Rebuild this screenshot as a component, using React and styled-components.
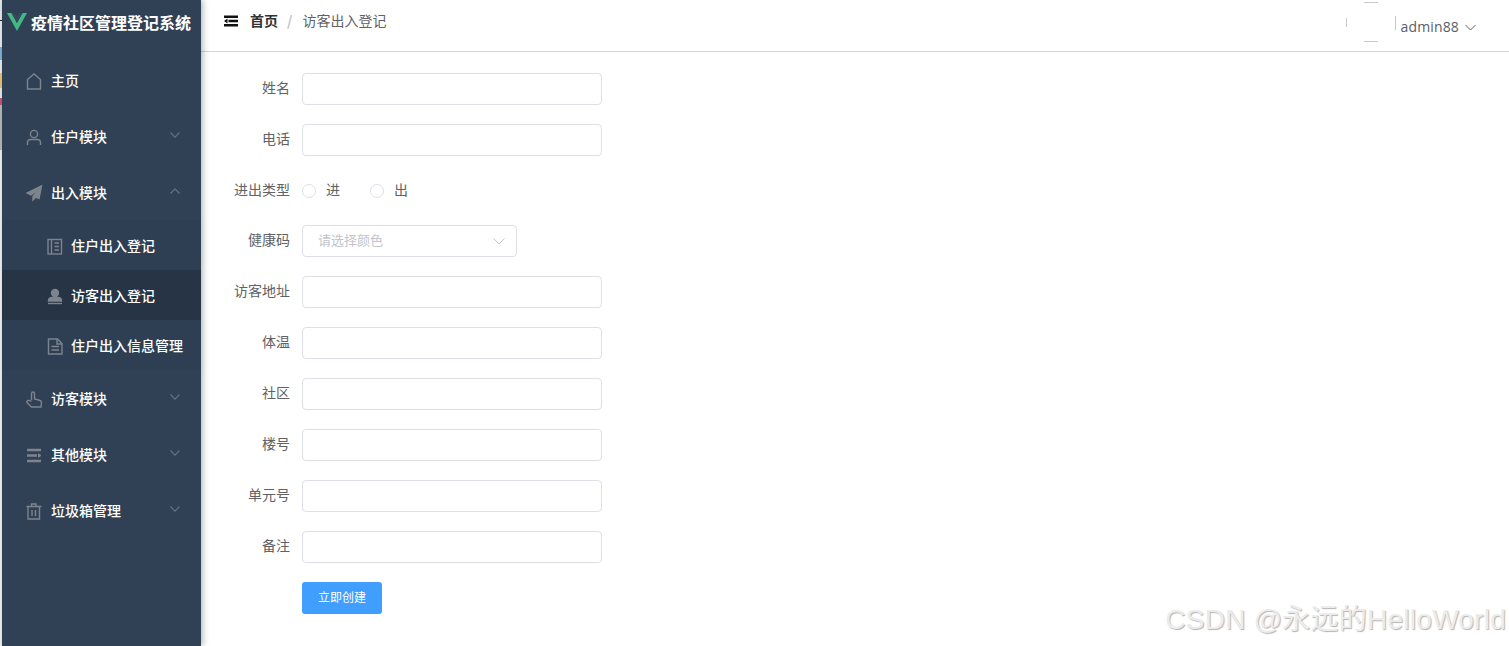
import React from "react";
import styled, { createGlobalStyle } from "styled-components";

const Global = createGlobalStyle`
  html, body { margin: 0; padding: 0; background: #fff; }
  body { font-family: "Liberation Sans", "Noto Sans CJK SC", sans-serif; overflow: hidden; }
  * { box-sizing: border-box; }
`;

const Page = styled.div`
  position: relative;
  display: flex;
  width: 1509px;
  height: 646px;
  overflow: hidden;
`;
const EdgeStrip = styled.div`
  width: 2px;
  flex: none;
  background: linear-gradient(#e6e8ea 0 20px, #222 20px 21px, #e8ecef 21px 47px, #7fb2d8 47px 60px, #e8ecef 60px 73px, #e6c674 73px 88px, #e8e8e8 88px 98px, #c7547f 98px 105px, #b9b9b9 105px 150px, #eef0f2 150px 646px);
`;
const Sidebar = styled.aside`
  width: 199px;
  flex: none;
  background: #304156;
  box-shadow: 2px 0 6px rgba(0, 21, 41, 0.3);
  z-index: 2;
`;
const Brand = styled.div`
  height: 44px;
  display: flex;
  align-items: center;
  padding-left: 5px;
  gap: 4px;
  color: #fff;
  font: 700 16px/20px "Noto Sans CJK SC", sans-serif;
  svg { flex: none; }
`;
const Menu = styled.nav`
  display: flex;
  flex-direction: column;
  padding-top: 8px;
`;
const Row = styled.div`
  height: 56px;
  display: flex;
  align-items: center;
  padding-left: 24px;
  padding-right: 21px;
  color: #fff;
  font: 500 14px/20px "Noto Sans CJK SC", sans-serif;
  gap: 8px;
`;
const SubRow = styled.div`
  height: 50px;
  display: flex;
  align-items: center;
  padding-left: 45px;
  gap: 7px;
  color: #fff;
  font: 500 14px/20px "Noto Sans CJK SC", sans-serif;
  background: ${(p) => (p.$active ? "#263445" : "#2f3f53")};
`;
const RowIcon = styled.svg`
  width: 17px;
  height: 17px;
  flex: none;
  margin-top: 2px;
  fill: none;
  stroke: #7d848e;
  stroke-width: 1.4;
`;
const Caret = styled.svg`
  width: 10px;
  height: 6px;
  margin-left: auto;
  margin-top: -3px;
  fill: none;
  stroke: #68727f;
  stroke-width: 1.1;
  transform: ${(p) => (p.$up ? "rotate(180deg)" : "none")};
`;
const Main = styled.main`
  flex: 1;
  min-width: 0;
  display: flex;
  flex-direction: column;
`;
const Header = styled.header`
  height: 52px;
  flex: none;
  border-bottom: 1px solid #d4d4d4;
  display: flex;
  align-items: flex-start;
  padding-left: 23px;
`;
const Hamburger = styled.svg`
  width: 14px;
  height: 12px;
  margin-top: 15px;
  flex: none;
`;
const Crumbs = styled.div`
  display: flex;
  align-items: center;
  height: 40px;
  margin-left: 12px;
  font: 14px/20px "Noto Sans CJK SC", sans-serif;
`;
const CrumbHome = styled.span`
  color: #303133;
  font-weight: 700;
`;
const CrumbSep = styled.span`
  color: #c0c4cc;
  margin: 0 10px 0 9px;
  font-weight: 700;
`;
const CrumbNow = styled.span`
  color: #606266;
`;
const UserBox = styled.div`
  margin-left: auto;
  margin-right: 33px;
  display: flex;
  align-items: flex-start;
  height: 50px;
  color: #5a5e66;
  font: 14px/20px "Open Sans", sans-serif;
`;
const Avatar = styled.svg`
  width: 50px;
  height: 40px;
  margin: 2px 5px 0 0;
`;
const UserName = styled.span`
  margin-top: 17px;
  letter-spacing: 0.15px;
`;
const UserCaret = styled.svg`
  width: 11px;
  height: 7px;
  margin: 24px 0 0 6px;
  fill: none;
  stroke: #5a5e66;
  stroke-width: 1;
`;
const Form = styled.div`
  padding: 21px 0 0 27px;
  display: flex;
  flex-direction: column;
  gap: 19px;
`;
const Field = styled.div`
  display: flex;
  align-items: center;
  height: ${(p) => p.$h || 32}px;
`;
const Label = styled.label`
  width: 62px;
  margin: -4px 12px 0 0;
  text-align: right;
  color: #606266;
  font: 14px/20px "Noto Sans CJK SC", sans-serif;
`;
const TextInput = styled.input`
  width: 300px;
  height: 32px;
  border: 1px solid #dcdfe6;
  border-radius: 4px;
  background: #fff;
  outline: none;
`;
const Radio = styled.span`
  display: flex;
  align-items: center;
  margin-right: 30px;
  color: #606266;
  font: 14px/20px "Noto Sans CJK SC", sans-serif;
  gap: 10px;
`;
const RadioText = styled.span`
  margin-top: -3px;
`;
const RadioDot = styled.span`
  width: 14px;
  height: 14px;
  border: 1px solid #dcdfe6;
  border-radius: 50%;
`;
const Select = styled.div`
  width: 215px;
  height: 32px;
  border: 1px solid #dcdfe6;
  border-radius: 4px;
  display: flex;
  align-items: center;
  padding: 0 11px 2px 15px;
  color: #c0c4cc;
  font: 13px/20px "Noto Sans CJK SC", sans-serif;
  justify-content: space-between;
`;
const SelectCaret = styled.svg`
  width: 12px;
  height: 8px;
  margin-top: 2px;
  fill: none;
  stroke: #c0c4cc;
  stroke-width: 1;
`;
const Submit = styled.button`
  width: 80px;
  height: 32px;
  margin-left: 74px;
  border: 0;
  padding: 0 0 2px;
  border-radius: 3px;
  background: #409eff;
  color: #fff;
  font: 12px/20px "Noto Sans CJK SC", sans-serif;
`;
const Watermark = styled.div`
  position: absolute;
  right: 3px;
  bottom: 9px;
  color: #ececec;
  font: 28px "Liberation Sans", "Noto Sans CJK SC", sans-serif;
  letter-spacing: 0.25px;
  text-shadow: 1px 1px 1px #b4b4b4;
`;

const ChevronPath = () => <path d="M.5 .5 5 5.200 9.500 .5" />;

const icons = {
  home: <path d="M1.500 16V6.500L8 1l6.500 5.500V16z" />,
  user: (
    <>
      <circle cx="8" cy="5" r="3.600" />
      <path d="M1.500 16v-2.500Q1.500 10.500 5 10.500h6q3.500 0 3.500 3V16" />
    </>
  ),
  plane: <path d="M15.500 1 1 8l4 2 9-7-7 8.500V15l2.800-3 3.200 1.500z" fill="#7d848e" />,
  book: (
    <>
      <rect x="1" y="1.500" width="13.500" height="14.500" />
      <path d="M4.500 1.500V16M7.500 5h4.500M7.500 8.500h4.500M7.500 12h4.500" />
    </>
  ),
  person: (
    <>
      <circle cx="8" cy="5" r="3.500" fill="#7d848e" />
      <path d="M1.500 13q0-3 3-3.500h7q3 .5 3 3.500z" fill="#7d848e" />
      <path d="M1 15.500h14" />
    </>
  ),
  doc: (
    <>
      <path d="M1.500 1h9l4.500 4.500V16H1.500z" />
      <path d="M10 1v5h5M4.500 8.500h7.500M4.500 12h7.500" />
    </>
  ),
  hand: <path d="M5.500 9V2.500a1.500 1.500 0 0 1 3 0V8l5 1.200q2 .5 2 2.500L15 16H5.500L1 11.500q-.5-1.500 1-2 1.500-.5 3.500 1" />,
  bars: (
    <g strokeWidth="2.400">
      <path d="M1 3h14M1 8.500h10M1 14h14" />
      <path d="M12.500 6.800v3.400l2.500-1.700z" strokeWidth="1" fill="#7d848e" />
    </g>
  ),
  trash: <path d="M.5 3.500h15M5.500 3.500V1h4.500v2.500M2 3.500V16h11.500V3.500M6 7v6M9.500 7v6" />,
};

const Icon = ({ name }) => <RowIcon viewBox="0 0 17 17">{icons[name]}</RowIcon>;

const MenuRow = ({ icon, label, caret, up }) => (
  <Row>
    <Icon name={icon} />
    <span>{label}</span>
    {caret && (
      <Caret viewBox="0 0 10 6" $up={up}>
        <ChevronPath />
      </Caret>
    )}
  </Row>
);

const Input = ({ label }) => (
  <Field>
    <Label>{label}</Label>
    <TextInput />
  </Field>
);

export default function App() {
  return (
    <Page>
      <Global />
      <EdgeStrip />
      <Sidebar>
        <Brand>
          <svg width="20" height="18" viewBox="0 0 20 18">
            <path d="M0 0h4.500L10 10 15.500 0H20L10 18z" fill="#42b983" />
            <path d="M4.500 0H7.500L10 4.500 12.500 0h3L10 10z" fill="#35495e" />
          </svg>
          <span>疫情社区管理登记系统</span>
        </Brand>
        <Menu>
          <MenuRow icon="home" label="主页" />
          <MenuRow icon="user" label="住户模块" caret />
          <MenuRow icon="plane" label="出入模块" caret up />
          <SubRow>
            <Icon name="book" />
            <span>住户出入登记</span>
          </SubRow>
          <SubRow $active>
            <Icon name="person" />
            <span>访客出入登记</span>
          </SubRow>
          <SubRow>
            <Icon name="doc" />
            <span>住户出入信息管理</span>
          </SubRow>
          <MenuRow icon="hand" label="访客模块" caret />
          <MenuRow icon="bars" label="其他模块" caret />
          <MenuRow icon="trash" label="垃圾箱管理" caret />
        </Menu>
      </Sidebar>
      <Main>
        <Header>
          <Hamburger viewBox="0 0 14 12">
            <path d="M0 .5h14v2.500H0zM4.500 4.800H14v2.400H4.500zM0 9h14v2.500H0zM3.500 3.500v5L0 6z" fill="#111" />
          </Hamburger>
          <Crumbs>
            <CrumbHome>首页</CrumbHome>
            <CrumbSep>/</CrumbSep>
            <CrumbNow>访客出入登记</CrumbNow>
          </Crumbs>
          <UserBox>
            <Avatar viewBox="0 0 50 40">
              <path d="M18 .5h14M18 39.500h14M.5 16v9M49.500 14v14" stroke="#c8c8c8" fill="none" />
            </Avatar>
            <UserName>admin88</UserName>
            <UserCaret viewBox="0 0 11 7">
              <path d="M.5 1 5.500 6l5-5" />
            </UserCaret>
          </UserBox>
        </Header>
        <Form>
          <Input label="姓名" />
          <Input label="电话" />
          <Field $h={31}>
            <Label>进出类型</Label>
            <Radio>
              <RadioDot />
              <RadioText>进</RadioText>
            </Radio>
            <Radio>
              <RadioDot />
              <RadioText>出</RadioText>
            </Radio>
          </Field>
          <Field>
            <Label>健康码</Label>
            <Select>
              <span>请选择颜色</span>
              <SelectCaret viewBox="0 0 12 8">
                <path d="M.5 1.500 6 7l5.500-5.500" />
              </SelectCaret>
            </Select>
          </Field>
          <Input label="访客地址" />
          <Input label="体温" />
          <Input label="社区" />
          <Input label="楼号" />
          <Input label="单元号" />
          <Input label="备注" />
          <Submit>立即创建</Submit>
        </Form>
      </Main>
      <Watermark>CSDN @永远的HelloWorld</Watermark>
    </Page>
  );
}
